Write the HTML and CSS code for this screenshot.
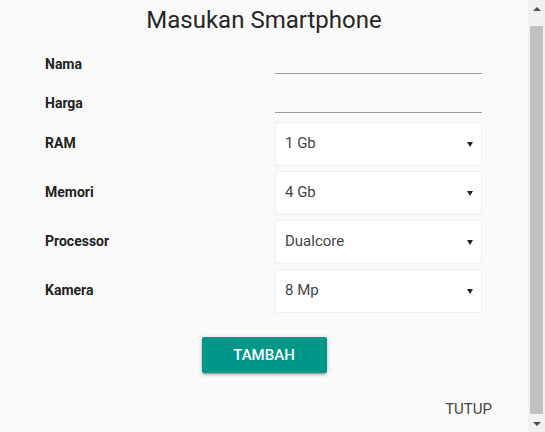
FILE: index.html
```html
<!DOCTYPE html>
<html lang="id">
<head>
<meta charset="utf-8">
<title>Masukan Smartphone</title>
<link rel="stylesheet" href="styles.css">
</head>
<body>
<div class="window">
  <main class="modal">
    <h4 class="title">Masukan Smartphone</h4>
    <form class="form">
      <div class="row row-text">
        <label class="label" for="nama">Nama</label>
        <input class="text-input" id="nama" type="text">
      </div>
      <div class="row row-text">
        <label class="label" for="harga">Harga</label>
        <input class="text-input" id="harga" type="text">
      </div>
      <div class="row row-select">
        <label class="label">RAM</label>
        <div class="select"><span class="select-value">1 Gb</span><svg class="caret" width="6" height="5" viewBox="0 0 6 5"><polygon points="0,0 6,0 3,5" fill="#222"/></svg></div>
      </div>
      <div class="row row-select">
        <label class="label">Memori</label>
        <div class="select"><span class="select-value">4 Gb</span><svg class="caret" width="6" height="5" viewBox="0 0 6 5"><polygon points="0,0 6,0 3,5" fill="#222"/></svg></div>
      </div>
      <div class="row row-select">
        <label class="label">Processor</label>
        <div class="select"><span class="select-value">Dualcore</span><svg class="caret" width="6" height="5" viewBox="0 0 6 5"><polygon points="0,0 6,0 3,5" fill="#222"/></svg></div>
      </div>
      <div class="row row-select">
        <label class="label">Kamera</label>
        <div class="select"><span class="select-value">8 Mp</span><svg class="caret" width="6" height="5" viewBox="0 0 6 5"><polygon points="0,0 6,0 3,5" fill="#222"/></svg></div>
      </div>
    </form>
    <div class="actions">
      <button class="btn" type="button">TAMBAH</button>
    </div>
    <div class="footer">
      <a class="flat-btn">TUTUP</a>
    </div>
  </main>
  <div class="scrollbar">
    <div class="sb-btn"><svg width="8" height="4" viewBox="0 0 8 4"><polygon points="0,4 8,4 4,0" fill="#505050"/></svg></div>
    <div class="sb-track"><div class="sb-thumb"></div></div>
    <div class="sb-btn"><svg width="8" height="4" viewBox="0 0 8 4"><polygon points="0,0 8,0 4,4" fill="#505050"/></svg></div>
  </div>
</div>
</body>
</html>
```

FILE: styles.css
```css
* { box-sizing: border-box; }

html, body {
  margin: 0;
  padding: 0;
  height: 100%;
  overflow: hidden;
}

body {
  background: #fafafa;
  font-family: Roboto, "Noto Sans", "Liberation Sans", sans-serif;
  color: #222;
}

.window {
  display: flex;
  height: 432px;
  width: 545px;
}

.modal {
  flex: 1;
  display: flex;
  flex-direction: column;
}

.title {
  margin: 5px 0 0;
  font-size: 24px;
  line-height: 30px;
  font-weight: 400;
  text-align: center;
  color: #262626;
}

.form {
  margin-top: 9px;
  padding-left: 45px;
  display: flex;
  flex-direction: column;
  gap: 5px;
}

.row {
  display: grid;
  grid-template-columns: 230px 207px;
}

.row-text {
  height: 30px;
  align-items: end;
  margin-bottom: 4px;
}

.row-select {
  height: 44px;
  align-items: center;
}

.label {
  font-size: 14px;
  line-height: 20px;
  font-weight: 700;
  color: #222;
}

.row-select .label {
  padding-bottom: 2px;
}

.text-input {
  height: 30px;
  width: 207px;
  border: none;
  border-bottom: 1px solid #9e9e9e;
  background: transparent;
  outline: none;
  padding: 0;
  font: inherit;
}

.select {
  height: 44px;
  background: #fff;
  border: 1px solid #f0f0f0;
  border-radius: 2px;
  display: flex;
  align-items: center;
  justify-content: space-between;
  padding: 0 8px 2px 9px;
}

.select-value {
  font-size: 15px;
  line-height: 20px;
  color: #444;
}

.caret {
  display: block;
  margin-top: 2px;
}

.actions {
  display: flex;
  justify-content: center;
  margin-top: 24px;
}

.btn {
  width: 125px;
  height: 36px;
  border: none;
  border-radius: 2px;
  background: #009688;
  color: #fff;
  font-family: inherit;
  font-size: 15px;
  font-weight: 500;
  letter-spacing: 0;
  padding: 0;
  box-shadow: 0 2px 2px 0 rgba(0,0,0,0.14), 0 3px 1px -2px rgba(0,0,0,0.12), 0 1px 5px 0 rgba(0,0,0,0.2);
}

.footer {
  display: flex;
  justify-content: flex-end;
  margin-top: 26px;
  padding-right: 36px;
}

.flat-btn {
  font-size: 15px;
  line-height: 20px;
  color: #444;
}

.scrollbar {
  width: 17px;
  flex: none;
  background: #f1f1f1;
  display: flex;
  flex-direction: column;
}

.sb-btn {
  height: 17px;
  display: flex;
  align-items: center;
  justify-content: center;
}

.sb-track {
  flex: 1;
  padding: 9px 2px 1px;
  display: flex;
}

.sb-thumb {
  flex: 1;
  background: #c1c1c1;
}
```
